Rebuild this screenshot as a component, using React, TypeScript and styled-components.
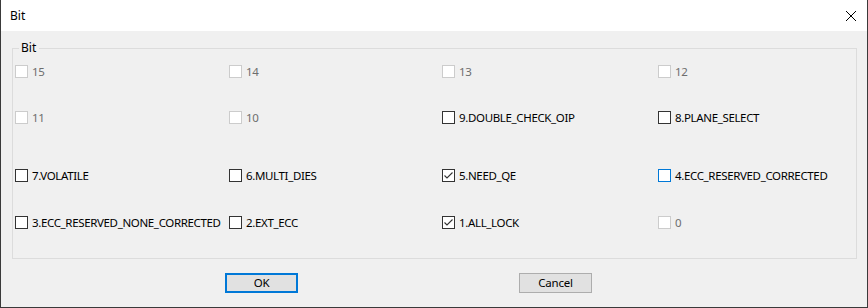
import React from "react";
import styled, { createGlobalStyle } from "styled-components";

const Global = createGlobalStyle`
  html, body { margin: 0; padding: 0; background: #f0f0f0; }
  body { font-family: "Noto Sans", "Open Sans", sans-serif; font-size: 12px; color: #000; }
`;

const Window = styled.div`
  width: 868px;
  height: 308px;
  box-sizing: border-box;
  background: #f0f0f0;
  border: 1px solid #3a3a3a;
  border-top: none;
  display: flex;
  flex-direction: column;
`;

const TitleBar = styled.div`
  height: 31px;
  background: #ffffff;
  display: flex;
  align-items: center;
  justify-content: space-between;
  padding: 0 9px 0 9px;
  box-sizing: border-box;
  flex-shrink: 0;
`;

const Title = styled.span`
  font-size: 12px;
  color: #000;
`;

const Close = styled.div`
  width: 12px;
  height: 12px;
  display: flex;
  margin-right: 1px;
`;

const Body = styled.div`
  flex: 1;
  display: flex;
  flex-direction: column;
  padding: 9px 10px 0 11px;
`;

const Group = styled.fieldset`
  margin: 0;
  padding: 9px 0 0 2px;
  border: 1px solid #dcdcdc;
  height: 219px;
  box-sizing: border-box;
`;

const Legend = styled.legend`
  padding: 0 3px 0 2px;
  margin-left: 4px;
  font-size: 12px;
  line-height: 16px;
`;

const Grid = styled.div`
  display: grid;
  grid-template-columns: 214px 213px 216px 1fr;
  grid-template-rows: 46px 58px 47px 16px;
`;

const Item = styled.label`
  display: flex;
  align-items: flex-start;
  gap: 4px;
  height: 13px;
`;

const Box = styled.span<{ $state: "normal" | "disabled" | "focus" }>`
  width: 13px;
  height: 13px;
  box-sizing: border-box;
  background: #fff;
  border: 1px solid
    ${(p) => (p.$state === "disabled" ? "#cccccc" : p.$state === "focus" ? "#0078d7" : "#333333")};
  display: flex;
  align-items: center;
  justify-content: center;
  flex-shrink: 0;
`;

const Text = styled.span<{ $disabled?: boolean }>`
  font-size: 11.5px;
  line-height: 14px;
  letter-spacing: -0.35px;
  color: ${(p) => (p.$disabled ? "#6d6d6d" : "#000")};
  white-space: nowrap;
`;

const Buttons = styled.div`
  display: flex;
  padding: 14px 0 0 213px;
  gap: 221px;
`;

const Button = styled.button<{ $default?: boolean }>`
  width: 73px;
  height: 20px;
  box-sizing: border-box;
  background: #e1e1e1;
  border: ${(p) => (p.$default ? "2px solid #0078d7" : "1px solid #adadad")};
  font-family: "Noto Sans", "Open Sans", sans-serif;
  font-size: 11.5px;
  letter-spacing: -0.2px;
  color: #000;
  padding: 0;
  line-height: 14px;
`;

type Bit = { label: string; disabled?: boolean; checked?: boolean; focus?: boolean };

const bits: Bit[] = [
  { label: "15", disabled: true },
  { label: "14", disabled: true },
  { label: "13", disabled: true },
  { label: "12", disabled: true },
  { label: "11", disabled: true },
  { label: "10", disabled: true },
  { label: "9.DOUBLE_CHECK_OIP" },
  { label: "8.PLANE_SELECT" },
  { label: "7.VOLATILE" },
  { label: "6.MULTI_DIES" },
  { label: "5.NEED_QE", checked: true },
  { label: "4.ECC_RESERVED_CORRECTED", focus: true },
  { label: "3.ECC_RESERVED_NONE_CORRECTED" },
  { label: "2.EXT_ECC" },
  { label: "1.ALL_LOCK", checked: true },
  { label: "0", disabled: true },
];

const Check = () => (
  <svg width="11" height="11" viewBox="0 0 11 11">
    <polyline points="1.5,5.5 4,8 9.5,2.5" fill="none" stroke="#333" strokeWidth="1.1" />
  </svg>
);

export default function App() {
  return (
    <>
      <Global />
      <Window>
        <TitleBar>
          <Title>Bit</Title>
          <Close>
            <svg width="12" height="12" viewBox="0 0 12 12">
              <path d="M1 1 L11 11 M11 1 L1 11" stroke="#000" strokeWidth="1" />
            </svg>
          </Close>
        </TitleBar>
        <Body>
          <Group>
            <Legend>Bit</Legend>
            <Grid>
              {bits.map((b) => (
                <Item key={b.label}>
                  <Box $state={b.disabled ? "disabled" : b.focus ? "focus" : "normal"}>
                    {b.checked && <Check />}
                  </Box>
                  <Text $disabled={b.disabled}>{b.label}</Text>
                </Item>
              ))}
            </Grid>
          </Group>
          <Buttons>
            <Button $default>OK</Button>
            <Button>Cancel</Button>
          </Buttons>
        </Body>
      </Window>
    </>
  );
}
